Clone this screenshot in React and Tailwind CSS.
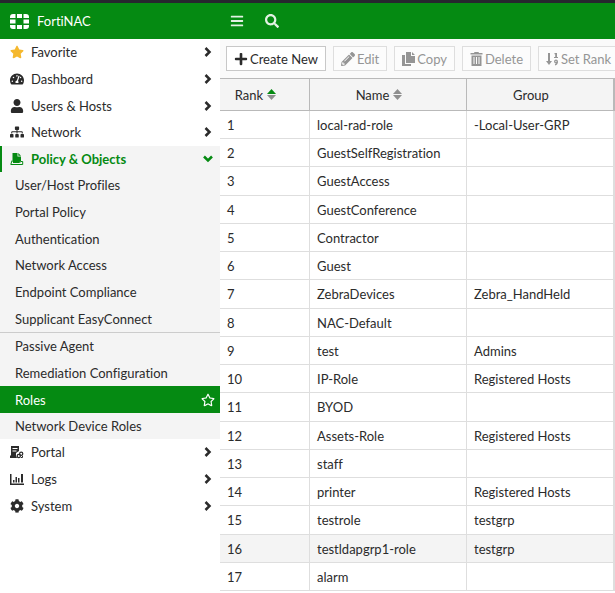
import { useState } from "react";
import {
  FaStar,
  FaRegStar,
  FaTachometerAlt,
  FaUser,
  FaSitemap,
  FaCog,
  FaBars,
  FaSearch,
  FaPlus,
  FaPencilAlt,
} from "react-icons/fa";

const Logo = () => (
  <svg viewBox="0 0 19 15" className="w-[19px] h-[15px] fill-white">
    <path d="M3 0h2.500v4H0V3a3 3 0 0 1 3-3zM7 0h5v4H7zM13.500 0H16a3 3 0 0 1 3 3v1h-5.500zM0 5.500h5.500v4H0zM13.500 5.500H19v4h-5.500zM0 11h5.500v4H3a3 3 0 0 1-3-3zM7 11h5v4H7zM13.500 11H19v1a3 3 0 0 1-3 3h-2.500z" />
  </svg>
);

const ChevronRight = () => (
  <svg viewBox="0 0 8 10" className="w-[8px] h-[10px]" fill="none" stroke="currentColor" strokeWidth="2.500">
    <path d="M1.500 1l4 4-4 4" />
  </svg>
);

const ChevronDown = () => (
  <svg viewBox="0 0 10 8" className="w-[10px] h-[8px]" fill="none" stroke="currentColor" strokeWidth="2.500">
    <path d="M1 1.500l4 4 4-4" />
  </svg>
);

const PolicyIcon = () => (
  <svg viewBox="0 0 14 14" className="w-[14px] h-[14px] fill-current">
    <path d="M2.500 1h5v3.500H11V9l-1.500 1h-7zM8.300 1L11 3.700H8.300z" />
    <path d="M2 8.500L.8 12.500h11.900v-3H11l-1.500 1H3" fill="none" stroke="currentColor" />
  </svg>
);

const PortalIcon = () => (
  <svg viewBox="0 0 14 14" className="w-[14px] h-[14px] fill-current">
    <path
      fillRule="evenodd"
      d="M1 1h8v5L6 8v2.500L7 13H0v-2.500h1zM2.500 3v1h5V3zM2.500 5.500v1h4v-1z"
    />
    <circle cx="8.800" cy="11" r="1.600" fill="none" stroke="currentColor" strokeWidth="1.200" />
    <circle cx="11.200" cy="8.800" r="1.600" fill="none" stroke="currentColor" strokeWidth="1.200" />
    <path d="M11 12.500h1.500V11" fill="none" stroke="currentColor" />
  </svg>
);

const LogsIcon = () => (
  <svg viewBox="0 0 14 12" className="w-[14px] h-[12px] fill-current">
    <path d="M0 1h1.500v9.500H14V12H0zM3 7h1.500v2.500H3zM5.500 4H7v5.500H5.500zM8 5h1.500v4.500H8zM11 1h2v8.500h-2z" />
  </svg>
);

const CopyIcon = () => (
  <svg viewBox="0 0 13 14" className="w-[13px] h-[14px] fill-current">
    <path d="M4 0h5v4h4v7H4zM10 0l3 3h-3zM0 3h3v9h6v2H0z" />
  </svg>
);

const TrashIcon = () => (
  <svg viewBox="0 0 13 14" className="w-[13px] h-[14px] fill-current">
    <path
      fillRule="evenodd"
      d="M4.500 0h4l.5 1h3.500v1.500h-12V1H4zM1.500 3.500h10V14h-10zM3.500 5v7h1V5zM6 5v7h1V5zM8.500 5v7h1V5z"
    />
  </svg>
);

const RankIcon = () => (
  <svg viewBox="0 0 13 14" className="w-[13px] h-[14px] fill-current">
    <path d="M2 1h2v8h2l-3 4-3-4h2zM8.500 1H11v4h1v1H8V5h1.200V2.200h-.7z" />
    <circle cx="10" cy="9.500" r="1.300" fill="none" stroke="currentColor" strokeWidth="1.300" />
    <path d="M11.300 9.500c0 2-.6 3-2.300 3.300" fill="none" stroke="currentColor" strokeWidth="1.300" />
  </svg>
);

const SortIcon = ({ up }) => (
  <svg viewBox="0 0 9 11" className="w-[9px] h-[11px] fill-[#8e8e8e]">
    <path d="M4.500 0L9 5H0z" className={up ? "fill-[#058a12]" : ""} />
    <path d="M4.500 11L0 6h9z" />
  </svg>
);

const mainMenu = [
  { name: "Favorite", icon: <FaStar className="text-[#f5b82e]" /> },
  { name: "Dashboard", icon: <FaTachometerAlt /> },
  { name: "Users & Hosts", icon: <FaUser /> },
  { name: "Network", icon: <FaSitemap /> },
];

const bottomMenu = [
  { name: "Portal", icon: <PortalIcon /> },
  { name: "Logs", icon: <LogsIcon /> },
  { name: "System", icon: <FaCog /> },
];

const policyLinks = [
  "User/Host Profiles",
  "Portal Policy",
  "Authentication",
  "Network Access",
  "Endpoint Compliance",
  "Supplicant EasyConnect",
];

const agentLinks = [
  "Passive Agent",
  "Remediation Configuration",
  "Roles",
  "Network Device Roles",
];

const roles = [
  { name: "local-rad-role", group: "-Local-User-GRP" },
  { name: "GuestSelfRegistration", group: "" },
  { name: "GuestAccess", group: "" },
  { name: "GuestConference", group: "" },
  { name: "Contractor", group: "" },
  { name: "Guest", group: "" },
  { name: "ZebraDevices", group: "Zebra_HandHeld" },
  { name: "NAC-Default", group: "" },
  { name: "test", group: "Admins" },
  { name: "IP-Role", group: "Registered Hosts" },
  { name: "BYOD", group: "" },
  { name: "Assets-Role", group: "Registered Hosts" },
  { name: "staff", group: "" },
  { name: "printer", group: "Registered Hosts" },
  { name: "testrole", group: "testgrp" },
  { name: "testldapgrp1-role", group: "testgrp" },
  { name: "alarm", group: "" },
];

function MenuList({ items }) {
  return (
    <ul>
      {items.map((item) => (
        <li key={item.name} className="h-[27px] nth-[3n]:h-[26px]">
          <button className="w-full h-full flex items-center pl-[10px] pr-2 pb-px cursor-pointer">
            <span className="w-[21px] text-[14px]">{item.icon}</span>
            <span className="flex-1 text-left">{item.name}</span>
            <ChevronRight />
          </button>
        </li>
      ))}
    </ul>
  );
}

function SubMenu({ items, active, onSelect }) {
  return (
    <ul className="bg-[#f4f4f4]">
      {items.map((name) => (
        <li key={name} className="h-[27px] nth-[3n+1]:h-[26px]">
          <a
            href="#"
            onClick={() => onSelect(name)}
            className={`h-full flex items-center justify-between pl-[15px] pr-[5px] ${
              active === name ? "bg-[#058a12] text-white" : ""
            }`}
          >
            {name}
            {active === name && <FaRegStar className="text-[14px]" />}
          </a>
        </li>
      ))}
    </ul>
  );
}

function ToolButton({ icon, label, disabled }) {
  return (
    <button
      disabled={disabled}
      className="h-[25px] shrink-0 flex items-center gap-[2px] px-[7px] border bg-white border-[#c8c8c8] disabled:bg-[#fcfcfc] disabled:border-[#dedede] disabled:text-[#959595]"
    >
      {icon}
      {label}
    </button>
  );
}

export default function App() {
  const [active, setActive] = useState("Roles");

  return (
    <div className="min-h-screen flex flex-col bg-white text-[#2b2b2b] text-[13px] leading-5 font-['Lato',sans-serif] [font-variant-ligatures:none]">
      <header className="flex h-[39px] border-t-3 border-[#26262e] bg-[#058a12] text-white">
        <div className="w-[220px] shrink-0 flex items-center gap-2 pl-[10px]">
          <Logo />
          FortiNAC
        </div>
        <div className="flex items-center gap-[21px] pl-[10px] text-[14px] text-[#e2f2e3]">
          <button aria-label="Menu">
            <FaBars />
          </button>
          <button aria-label="Search">
            <FaSearch />
          </button>
        </div>
      </header>

      <div className="flex flex-1">
        <nav className="w-[220px] shrink-0">
          <MenuList items={mainMenu} />
          <button className="w-full h-[26px] flex items-center border-l-2 border-[#058a12] bg-[#f4f4f4] pl-2 pr-[7px] font-bold text-[#058a12]">
            <span className="w-[21px]">
              <PolicyIcon />
            </span>
            <span className="flex-1 text-left">Policy & Objects</span>
            <ChevronDown />
          </button>
          <SubMenu items={policyLinks} active={active} onSelect={setActive} />
          <div className="border-t border-[#cccccc]">
            <SubMenu items={agentLinks} active={active} onSelect={setActive} />
          </div>
          <MenuList items={bottomMenu} />
        </nav>

        <main className="flex-1 min-w-0 overflow-hidden">
          <div className="h-[39px] flex items-center gap-[7px] px-[6px] bg-[#fafafa]">
            <ToolButton icon={<FaPlus className="text-[14px]" />} label="Create New" />
            <ToolButton icon={<FaPencilAlt className="text-[14px]" />} label="Edit" disabled />
            <ToolButton icon={<CopyIcon />} label="Copy" disabled />
            <ToolButton icon={<TrashIcon />} label="Delete" disabled />
            <ToolButton icon={<RankIcon />} label="Set Rank" disabled />
          </div>
          <table className="w-full table-fixed border-separate border-spacing-0">
            <thead>
              <tr className="h-[33px] bg-[#f4f4f4] *:border-y *:border-r *:border-[#b9b9b9] *:pr-[18px] *:font-normal">
                <th className="w-[90px]">
                  <span className="flex items-center justify-center gap-1">
                    Rank <SortIcon up />
                  </span>
                </th>
                <th className="w-[157px]">
                  <span className="flex items-center justify-center gap-1">
                    Name <SortIcon />
                  </span>
                </th>
                <th className="w-[147px]">Group</th>
                <th aria-label="Other columns"></th>
              </tr>
            </thead>
            <tbody>
              {roles.map((role, index) => (
                <tr
                  key={role.name}
                  className="h-[28px] nth-[4n+3]:h-[29px] nth-16:bg-[#f4f4f4] *:border-b *:border-r *:border-[#dedede] *:px-[7px]"
                >
                  <td>{index + 1}</td>
                  <td>{role.name}</td>
                  <td>{role.group}</td>
                  <td></td>
                </tr>
              ))}
            </tbody>
          </table>
        </main>
      </div>
    </div>
  );
}
